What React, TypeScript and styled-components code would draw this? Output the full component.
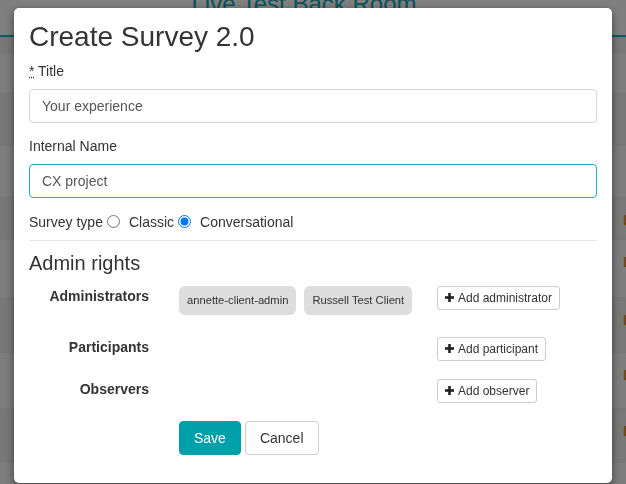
import React, { useEffect, useRef } from "react";
import styled, { createGlobalStyle } from "styled-components";

const GlobalStyle = createGlobalStyle`
    body {
        margin: 0;
        font-family: "Liberation Sans", Arial, sans-serif;
        color: #333;
        overflow: hidden;
    }
`;

const rows = [
    { h: 15 },
    { h: 41 },
    { h: 52 },
    { h: 52 },
    { h: 42, status: "Live" },
    { h: 58, status: "Live" },
    { h: 55, status: "Live" },
    { h: 56, status: "Live" },
    { h: 54, status: "Live" },
    { h: 30 },
];

const people = [
    { label: "Administrators", members: ["annette-client-admin", "Russell Test Client"], action: "Add administrator" },
    { label: "Participants", members: [], action: "Add participant" },
    { label: "Observers", members: [], action: "Add observer" },
];

const PlusIcon = () => (
    <svg width="9" height="9" viewBox="0 0 9 9" aria-hidden="true">
        <rect x="3.2" y="0" width="2.6" height="9" fill="#222" />
        <rect x="0" y="3.2" width="9" height="2.6" fill="#222" />
    </svg>
);

const App = () => {
    const nameRef = useRef<HTMLInputElement>(null);

    useEffect(() => {
        const el = nameRef.current;
        if (el) {
            el.focus();
            el.setSelectionRange(el.value.length, el.value.length);
        }
    }, []);

    return (
        <>
            <GlobalStyle />
            <Page>
                <PageHeader>
                    <PageTitle>Live Test Back Room</PageTitle>
                </PageHeader>
                {rows.map((row, i) => (
                    <TableRow key={i} $shade={i % 2 === 0} style={{ height: row.h }}>
                        <span />
                        <span />
                        <span />
                        <span />
                        <Status>{row.status}</Status>
                    </TableRow>
                ))}
            </Page>
            <Backdrop />
            <Dialog>
                <DialogTitle>Create Survey 2.0</DialogTitle>
                <Field>
                    <FieldLabel>
                        <abbr title="required">*</abbr> Title
                    </FieldLabel>
                    <TextInput defaultValue="Your experience" />
                </Field>
                <Field>
                    <FieldLabel>Internal Name</FieldLabel>
                    <TextInput ref={nameRef} $active defaultValue="CX project" />
                </Field>
                <SurveyType>
                    Survey type
                    <RadioOption>
                        <Radio type="radio" name="type" />
                        Classic
                    </RadioOption>
                    <RadioOption>
                        <Radio type="radio" name="type" defaultChecked />
                        Conversational
                    </RadioOption>
                </SurveyType>
                <Divider />
                <SectionTitle>Admin rights</SectionTitle>
                {people.map((group) => (
                    <PeopleRow key={group.label}>
                        <RowLabel>{group.label}</RowLabel>
                        <ChipList>
                            {group.members.map((m) => (
                                <Chip key={m}>{m}</Chip>
                            ))}
                        </ChipList>
                        <AddButton>
                            <PlusIcon />
                            {group.action}
                        </AddButton>
                    </PeopleRow>
                ))}
                <Actions>
                    <SaveButton>Save</SaveButton>
                    <CancelButton>Cancel</CancelButton>
                </Actions>
            </Dialog>
        </>
    );
};

const Page = styled.div`
    background: #fff;
    height: 484px;
    overflow: hidden;
`;

const PageHeader = styled.div`
    height: 35px;
    display: flex;
    justify-content: center;
    padding-right: 18px;
    border-bottom: 2px solid #15bccb;
    overflow: hidden;
`;

const PageTitle = styled.h2`
    margin: -8px 0 0;
    font-size: 24px;
    line-height: 24px;
    font-weight: 400;
    color: #0fa6b4;
`;

const TableRow = styled.div<{ $shade: boolean }>`
    display: grid;
    grid-template-columns: 290px 90px 140px 95px 1fr;
    box-sizing: border-box;
    padding-top: 14px;
    background: ${({ $shade }) => ($shade ? "#f1f1f1" : "#fbfbfb")};
    border-top: 1px solid #ececec;
`;

const Status = styled.span`
    padding-left: 8px;
    font-size: 14px;
    font-weight: 700;
    color: #d8902c;
`;

const Backdrop = styled.div`
    position: fixed;
    inset: 0;
    background: rgba(0, 0, 0, 0.5);
`;

const Dialog = styled.div`
    position: fixed;
    top: 8px;
    left: 14px;
    width: 598px;
    height: 475px;
    box-sizing: border-box;
    padding: 14px 15px;
    background: #fff;
    border-radius: 5px;
    box-shadow: 0 3px 9px rgba(0, 0, 0, 0.5);
`;

const DialogTitle = styled.h1`
    margin: 0 0 8px;
    font-size: 28px;
    line-height: 1.1;
    font-weight: 400;
    color: #333;
`;

const Field = styled.div`
    margin-bottom: 13px;
`;

const FieldLabel = styled.label`
    display: block;
    margin-bottom: 8px;
    font-size: 14px;
    line-height: 20px;
    color: #333;

    abbr {
        text-decoration: underline dotted;
    }
`;

const TextInput = styled.input<{ $active?: boolean }>`
    display: block;
    width: 100%;
    height: 34px;
    box-sizing: border-box;
    padding: 6px 12px;
    font-family: inherit;
    font-size: 14px;
    color: #555;
    caret-color: #333;
    background: #fff;
    border: 1px solid ${({ $active }) => ($active ? "#1db1bf" : "#d4d4d4")};
    border-radius: 4px;
    outline: none;
`;

const SurveyType = styled.div`
    display: flex;
    align-items: center;
    margin: 14px 0 8px;
    font-size: 14px;
    line-height: 20px;
    color: #333;
`;

const RadioOption = styled.label`
    display: flex;
    align-items: center;
`;

const Radio = styled.input`
    width: 13px;
    height: 13px;
    margin: 0 9px 0 4px;
`;

const Divider = styled.hr`
    border: 0;
    border-top: 1px solid #e5e5e5;
    margin: 0 0 11px;
`;

const SectionTitle = styled.h4`
    margin: 0 0 12px;
    font-size: 20px;
    line-height: 22px;
    font-weight: 400;
    color: #333;
`;

const PeopleRow = styled.div`
    display: grid;
    grid-template-columns: 150px 258px auto;
    align-items: start;
    margin-bottom: 18px;
`;

const RowLabel = styled.div`
    padding-right: 30px;
    text-align: right;
    font-size: 14px;
    line-height: 20px;
    font-weight: 700;
    color: #333;
`;

const ChipList = styled.div`
    display: flex;
    flex-wrap: wrap;
    gap: 8px;
`;

const Chip = styled.span`
    display: inline-flex;
    align-items: center;
    height: 29px;
    margin-bottom: 4px;
    padding: 0 8px;
    background: #ddd;
    border-radius: 6px;
    font-size: 11.2px;
    color: #333;
`;

const AddButton = styled.button`
    justify-self: start;
    display: inline-flex;
    align-items: center;
    gap: 4px;
    height: 24px;
    padding: 0 7px;
    background: #fff;
    border: 1px solid #ccc;
    border-radius: 3px;
    font-family: inherit;
    font-size: 12px;
    color: #333;
`;

const Actions = styled.div`
    display: flex;
    gap: 4px;
    margin-left: 150px;
`;

const SaveButton = styled.button`
    height: 34px;
    padding: 0 14px;
    background: #00a0ab;
    border: 1px solid #00a0ab;
    border-radius: 4px;
    font-family: inherit;
    font-size: 14px;
    color: #fff;
`;

const CancelButton = styled(SaveButton)`
    background: #fff;
    border-color: #ccc;
    color: #333;
`;

export default App;
